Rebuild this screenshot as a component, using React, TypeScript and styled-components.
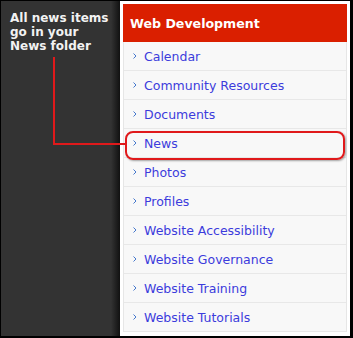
import React from "react";
import styled, { createGlobalStyle } from "styled-components";

const GlobalStyle = createGlobalStyle`
  html, body {
    margin: 0;
    padding: 0;
    background: #ffffff;
  }
`;

const Frame = styled.div`
  position: relative;
  width: 353px;
  height: 338px;
  box-sizing: border-box;
  border: 1px solid #000;
  border-right-width: 3px;
  border-bottom-width: 2px;
  display: flex;
  overflow: hidden;
`;

const Side = styled.div`
  width: 119px;
  flex-shrink: 0;
  box-sizing: border-box;
  padding: 10px 0 0 9px;
  background: linear-gradient(to right, #333333 0, #333333 110px, #111111 119px);
`;

const Note = styled.p`
  margin: 0;
  font-family: "DejaVu Sans", Verdana, sans-serif;
  font-weight: bold;
  font-size: 12px;
  line-height: 14px;
  color: #f2f2f2;
`;

const Panel = styled.div`
  flex: 1;
  background: #ffffff;
  padding: 3px 3px 0 3px;
  display: flex;
  flex-direction: column;
`;

const Header = styled.div`
  height: 38px;
  background: #da1f00;
  display: flex;
  align-items: center;
  padding-left: 7px;
  font-family: "DejaVu Sans", Verdana, sans-serif;
  font-weight: bold;
  font-size: 12.6px;
  color: #ffffff;
`;

const List = styled.ul`
  margin: 0;
  padding: 0;
  list-style: none;
  border-left: 1px solid #e6e6e6;
  border-right: 1px solid #e6e6e6;
`;

const Item = styled.li`
  height: 29px;
  box-sizing: border-box;
  border-bottom: 1px solid #e8e8e8;
  background: #f8f8f8;
  display: flex;
  align-items: center;
  padding-left: 9px;
  gap: 7px;
  font-family: "DejaVu Sans", Verdana, sans-serif;
  font-size: 12.5px;
  color: #3c3cdc;
`;

const Chevron = () => (
  <svg width="4" height="6" viewBox="0 0 4 6">
    <polyline points="0.5,0.5 3,3 0.5,5.5" fill="none" stroke="#4477cc" strokeWidth="1" />
  </svg>
);

const Callout = styled.div`
  position: absolute;
  left: 124px;
  top: 130px;
  width: 216px;
  height: 25px;
  border: 2px solid #e0191b;
  border-radius: 8px;
  box-shadow: 1px 1px 2px rgba(0, 0, 0, 0.35);
`;

const Leader = styled.div`
  position: absolute;
  left: 52px;
  top: 56px;
  width: 72px;
  height: 86px;
  border-left: 2px solid #e0191b;
  border-bottom: 2px solid #e0191b;
`;

const items = [
  "Calendar",
  "Community Resources",
  "Documents",
  "News",
  "Photos",
  "Profiles",
  "Website Accessibility",
  "Website Governance",
  "Website Training",
  "Website Tutorials",
];

export default function App() {
  return (
    <>
      <GlobalStyle />
      <Frame>
        <Side>
          <Note>
            All news items
            <br />
            go in your
            <br />
            News folder
          </Note>
        </Side>
        <Panel>
          <Header>Web Development</Header>
          <List>
            {items.map((label) => (
              <Item key={label}>
                <Chevron />
                {label}
              </Item>
            ))}
          </List>
        </Panel>
        <Leader />
        <Callout />
      </Frame>
    </>
  );
}
